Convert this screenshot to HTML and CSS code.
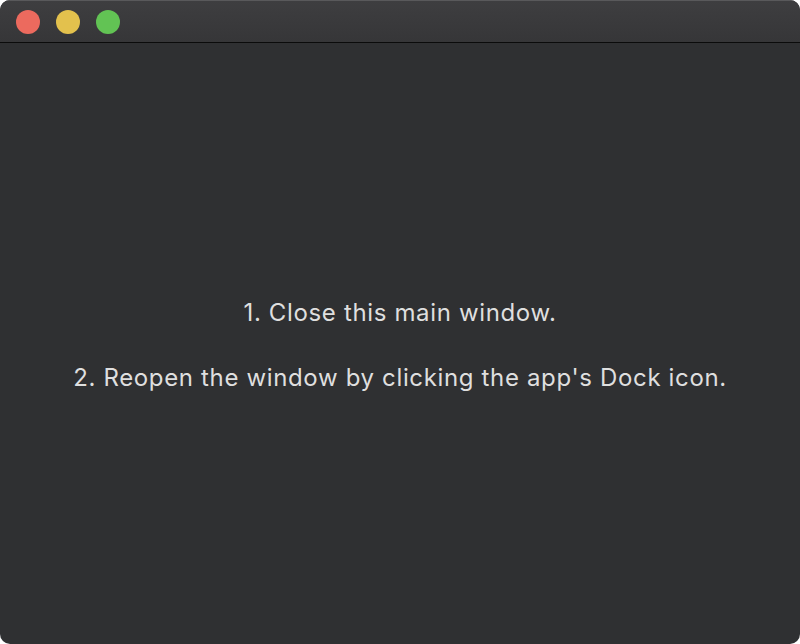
FILE: index.html
```html
<!DOCTYPE html>
<html>
<head>
<meta charset="utf-8">
<link rel="stylesheet" href="styles.css">
</head>
<body>
<div class="window">
  <div class="titlebar">
    <span class="light red"></span>
    <span class="light yellow"></span>
    <span class="light green"></span>
  </div>
  <div class="content">
    <p class="line">1. Close this main window.</p>
    <p class="line">2. Reopen the window by clicking the app's Dock icon.</p>
  </div>
</div>
</body>
</html>
```
FILE: styles.css
```css
html, body {
  margin: 0;
  padding: 0;
  background: #ffffff;
}
.window {
  width: 800px;
  height: 644px;
  border-radius: 10px;
  overflow: hidden;
  background: #2f3032;
  display: flex;
  flex-direction: column;
}
.titlebar {
  height: 43px;
  flex: 0 0 43px;
  box-sizing: border-box;
  background: linear-gradient(#3e3e40, #363638);
  border-top: 1px solid #59595b;
  border-bottom: 1px solid #0b0b0b;
  display: flex;
  align-items: center;
  padding-left: 16px;
  gap: 16px;
}
.light {
  width: 24px;
  height: 24px;
  border-radius: 50%;
  display: block;
}
.red { background: #ec6a5e; }
.yellow { background: #e3c14d; }
.green { background: #62c354; }
.content {
  flex: 1;
  display: flex;
  flex-direction: column;
  align-items: center;
  justify-content: center;
  gap: 37px;
  font-family: Inter, "Liberation Sans", sans-serif;
  font-size: 24px;
  color: #dfdfdf;
  padding-top: 3px;
}
.line {
  margin: 0;
  line-height: 28px;
  letter-spacing: 0.65px;
}
```
